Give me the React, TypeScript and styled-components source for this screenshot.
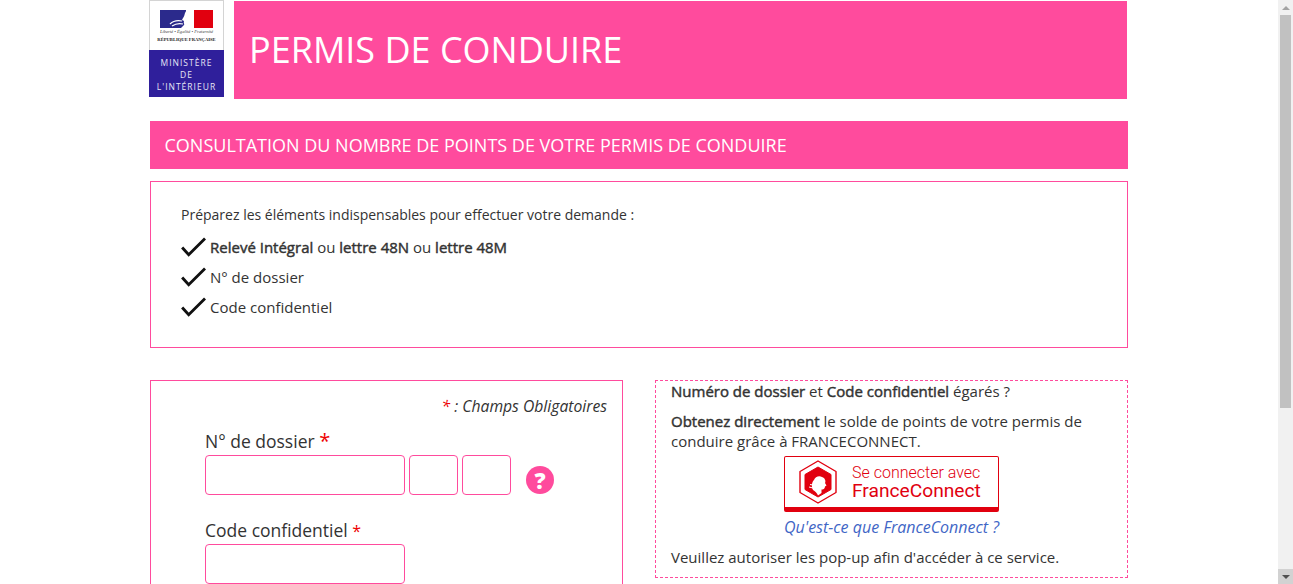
import React from "react";
import styled, { createGlobalStyle } from "styled-components";

const PINK = "#ff4b9d";
const TEXT = "#333333";
const RED = "#e1000f";

const GlobalStyle = createGlobalStyle`
  html, body {
    margin: 0;
    height: 100%;
    overflow: hidden;
    background: #ffffff;
  }
  #root {
    height: 100%;
  }
  * {
    box-sizing: border-box;
  }
`;

const Viewport = styled.div`
  display: flex;
  height: 100%;
  font-family: "Open Sans", sans-serif;
  color: ${TEXT};
`;

const Page = styled.main`
  flex: 1;
  min-width: 0;
  overflow: hidden;
`;

const Wrapper = styled.div`
  width: 979px;
  margin-left: 149px;
`;

const Header = styled.header`
  display: flex;
  gap: 10px;
  height: 99px;
`;

const Logo = styled.div`
  width: 75px;
  height: 97px;
  display: flex;
  flex-direction: column;
  flex: none;
`;

const LogoTop = styled.div`
  height: 50px;
  background: #fff;
  display: flex;
  flex-direction: column;
  align-items: center;
  padding-top: 9px;
  border: 1px solid #d4d4d4;
  border-bottom: none;
`;

const Motto = styled.div`
  font-family: "Liberation Serif", serif;
  font-style: italic;
  font-size: 4.6px;
  line-height: 6px;
  margin-top: 1px;
  white-space: nowrap;
  color: #444;
`;

const Republic = styled.div`
  font-family: "Liberation Serif", serif;
  font-weight: bold;
  font-size: 4.6px;
  line-height: 7px;
  margin-top: 1px;
  white-space: nowrap;
  color: #222;
`;

const LogoBottom = styled.div`
  flex: 1;
  background: #2f1f9b;
  color: #e6e4f5;
  font-size: 8.5px;
  line-height: 12px;
  letter-spacing: 1px;
  text-align: center;
  padding-top: 7px;
  white-space: nowrap;
`;

const Banner = styled.div`
  width: 893px;
  height: 98px;
  margin-top: 1px;
  background: ${PINK};
  color: #fff;
  font-size: 36px;
  line-height: 98px;
  padding-left: 15px;
`;

const TitleBar = styled.h1`
  margin: 22px 0 0 1px;
  height: 48px;
  background: ${PINK};
  color: #fff;
  font-size: 18px;
  font-weight: 400;
  line-height: 48px;
  padding-left: 14.5px;
`;

const InfoBox = styled.section`
  margin: 12px 0 0 1px;
  height: 167px;
  border: 1px solid ${PINK};
  padding: 23px 30px 0;
  font-size: 14px;
`;

const InfoIntro = styled.div`
  line-height: 20px;
  margin-bottom: 7px;
`;

const CheckRow = styled.div`
  display: flex;
  align-items: center;
  height: 30px;
  gap: 4px;
  font-size: 15px;

  b {
    font-weight: 400;
    -webkit-text-stroke: 0.45px currentColor;
  }
`;

const CheckIcon = styled.svg`
  width: 25px;
  height: 20px;
  flex: none;
`;

const Columns = styled.div`
  display: flex;
  justify-content: space-between;
  margin: 32px 0 0 1px;
`;

const FormPanel = styled.section`
  width: 473px;
  height: 260px;
  border: 1px solid ${PINK};
  padding: 15px 15px 0 54px;
`;

const Required = styled.div`
  text-align: right;
  font-size: 15.7px;
  font-style: italic;
  line-height: 20px;
`;

const Star = styled.span`
  color: #ee0000;
`;

const LabelStar = styled.span<{ $size: number }>`
  color: #ee0000;
  font-size: ${(p) => p.$size}px;
`;

const FieldLabel = styled.div`
  font-size: 17.5px;
  line-height: 25px;
  margin-bottom: 1px;
`;

const Field = styled.div`
  margin-top: 12px;

  & + & {
    margin-top: 23px;
  }

  & + & ${FieldLabel} {
    margin-bottom: 0;
  }
`;

const InputRow = styled.div`
  display: flex;
  align-items: center;
  gap: 4px;
`;

const TextInput = styled.input<{ $width: number }>`
  width: ${(p) => p.$width}px;
  height: 40px;
  border: 1px solid ${PINK};
  border-radius: 4px;
  background: #fff;
  padding: 0 8px;
  outline: none;
`;

const HelpButton = styled.div`
  width: 28px;
  height: 28px;
  margin: 10px 0 0 11px;
  border-radius: 50%;
  background: ${PINK};
  color: #fff;
  font-size: 22px;
  font-weight: 800;
  line-height: 28px;
  text-align: center;
`;

const SidePanel = styled.section`
  width: 473px;
  height: 198px;
  border: 1px dashed ${PINK};
  padding: 0 15px;
  font-size: 15px;
  line-height: 20px;

  b {
    font-weight: 400;
    -webkit-text-stroke: 0.45px currentColor;
  }
`;

const SideParagraph = styled.div`
  margin-top: 10px;
`;

const FcCenter = styled.div`
  display: flex;
  flex-direction: column;
  align-items: center;
  margin-top: 5px;
`;

const FcButton = styled.div`
  width: 215px;
  height: 56px;
  display: flex;
  align-items: center;
  gap: 15px;
  padding-left: 14px;
  border: 1px solid ${RED};
  border-bottom: 5px solid ${RED};
  border-radius: 2px;
  background: #fff;
`;

const FcLabel = styled.div`
  font-family: Roboto, sans-serif;
  color: ${RED};
  white-space: nowrap;
`;

const FcLine = styled.div`
  font-size: 16px;
  font-weight: 300;
  line-height: 17px;
`;

const FcBrand = styled.div`
  font-size: 19.2px;
  font-weight: 400;
  line-height: 20px;
`;

const FcLink = styled.a`
  margin-top: 5px;
  color: #3f66c6;
  font-size: 16px;
  font-style: italic;
`;

const SideFooter = styled.div`
  margin-top: 10px;
`;

const Scrollbar = styled.div`
  width: 15px;
  flex: none;
  display: flex;
  flex-direction: column;
  justify-content: space-between;
  position: relative;
  background: #f1f1f1;
`;

const ScrollButton = styled.div<{ $active?: boolean }>`
  height: 15px;
  display: flex;
  align-items: center;
  justify-content: center;
  background: ${(p) => (p.$active ? "#d2d2d2" : "transparent")};
`;

const ArrowUp = styled.div`
  width: 0;
  height: 0;
  border-left: 4px solid transparent;
  border-right: 4px solid transparent;
  border-bottom: 4px solid #a3a3a3;
`;

const ArrowDown = styled.div`
  width: 0;
  height: 0;
  border-left: 4px solid transparent;
  border-right: 4px solid transparent;
  border-top: 4px solid #505050;
`;

const Thumb = styled.div`
  position: absolute;
  top: 15px;
  left: 2px;
  width: 11px;
  height: 393px;
  background: #c1c1c1;
`;

const Check = () => (
  <CheckIcon viewBox="0 0 26 20">
    <path d="M1.2 10.5 L8 18 L25 1.2" fill="none" stroke="#111" strokeWidth="3" />
  </CheckIcon>
);

const MinistryLogo = () => (
  <Logo>
    <LogoTop>
      <svg width="53" height="18" viewBox="0 0 53 18">
        <rect width="26" height="18" fill="#2b2a8c" />
        <rect x="26" width="8" height="18" fill="#ffffff" />
        <rect x="34" width="19" height="18" fill="#e1000f" />
        <path d="M34 0 L27 0 C24 3 25 6 23 8 L22 10 L24 11 C23 13 25 14 24 15 C23 16 22 17 21 18 L34 18 Z" fill="#ffffff" />
        <path d="M10 14 C13 11 17 10 22 11 M12 16 C15 14 19 13 23 14" fill="none" stroke="#ffffff" strokeWidth="1.2" />
      </svg>
      <Motto>Liberté • Égalité • Fraternité</Motto>
      <Republic>RÉPUBLIQUE FRANÇAISE</Republic>
    </LogoTop>
    <LogoBottom>
      MINISTÈRE
      <br />
      DE
      <br />
      L'INTÉRIEUR
    </LogoBottom>
  </Logo>
);

const FranceConnectButton = () => (
  <FcButton>
    <svg width="38" height="44" viewBox="0 0 38 44">
      <path d="M19 1 L37 11.5 L37 32.5 L19 43 L1 32.5 L1 11.5 Z" fill="none" stroke="#e1000f" strokeWidth="1.4" strokeLinejoin="round" />
      <path d="M19 7 L32 14.5 L32 29.5 L19 37 L6 29.5 L6 14.5 Z" fill="#e1000f" stroke="#e1000f" strokeWidth="1" strokeLinejoin="round" />
      <path d="M14 30 C12 26 13 22 15 20 C16 17 20 15 23 17 C26 18 27 21 26 23 L27.5 25.5 L26 26.5 C26 29 24 29.5 22.5 29.5 L22.5 33 L19 35.5 C18 33 16 31 14 30 Z" fill="#ffffff" />
      <path d="M10 27 L14 28 M11 24.5 L14 25" fill="none" stroke="#ffffff" strokeWidth="1" />
    </svg>
    <FcLabel>
      <FcLine>Se connecter avec</FcLine>
      <FcBrand>FranceConnect</FcBrand>
    </FcLabel>
  </FcButton>
);

const App = () => {
  return (
    <Viewport>
      <GlobalStyle />
      <Page>
        <Wrapper>
          <Header>
            <MinistryLogo />
            <Banner>PERMIS DE CONDUIRE</Banner>
          </Header>
          <TitleBar>CONSULTATION DU NOMBRE DE POINTS DE VOTRE PERMIS DE CONDUIRE</TitleBar>
          <InfoBox>
            <InfoIntro>Préparez les éléments indispensables pour effectuer votre demande :</InfoIntro>
            <CheckRow>
              <Check />
              <span>
                <b>Relevé Intégral</b> ou <b>lettre 48N</b> ou <b>lettre 48M</b>
              </span>
            </CheckRow>
            <CheckRow>
              <Check />
              <span>N° de dossier</span>
            </CheckRow>
            <CheckRow>
              <Check />
              <span>Code confidentiel</span>
            </CheckRow>
          </InfoBox>
          <Columns>
            <FormPanel>
              <Required>
                <Star>*</Star> : Champs Obligatoires
              </Required>
              <Field>
                <FieldLabel>
                  N° de dossier <LabelStar $size={20}>*</LabelStar>
                </FieldLabel>
                <InputRow>
                  <TextInput $width={200} />
                  <TextInput $width={49} />
                  <TextInput $width={49} />
                  <HelpButton>?</HelpButton>
                </InputRow>
              </Field>
              <Field>
                <FieldLabel>
                  Code confidentiel <LabelStar $size={16}>*</LabelStar>
                </FieldLabel>
                <InputRow>
                  <TextInput $width={200} />
                </InputRow>
              </Field>
            </FormPanel>
            <SidePanel>
              <div>
                <b>Numéro de dossier</b> et <b>Code confidentiel</b> égarés ?
              </div>
              <SideParagraph>
                <b>Obtenez directement</b> le solde de points de votre permis de conduire grâce à FRANCECONNECT.
              </SideParagraph>
              <FcCenter>
                <FranceConnectButton />
                <FcLink>Qu'est-ce que FranceConnect ?</FcLink>
              </FcCenter>
              <SideFooter>Veuillez autoriser les pop-up afin d'accéder à ce service.</SideFooter>
            </SidePanel>
          </Columns>
        </Wrapper>
      </Page>
      <Scrollbar>
        <ScrollButton>
          <ArrowUp />
        </ScrollButton>
        <Thumb />
        <ScrollButton $active>
          <ArrowDown />
        </ScrollButton>
      </Scrollbar>
    </Viewport>
  );
};

export default App;
